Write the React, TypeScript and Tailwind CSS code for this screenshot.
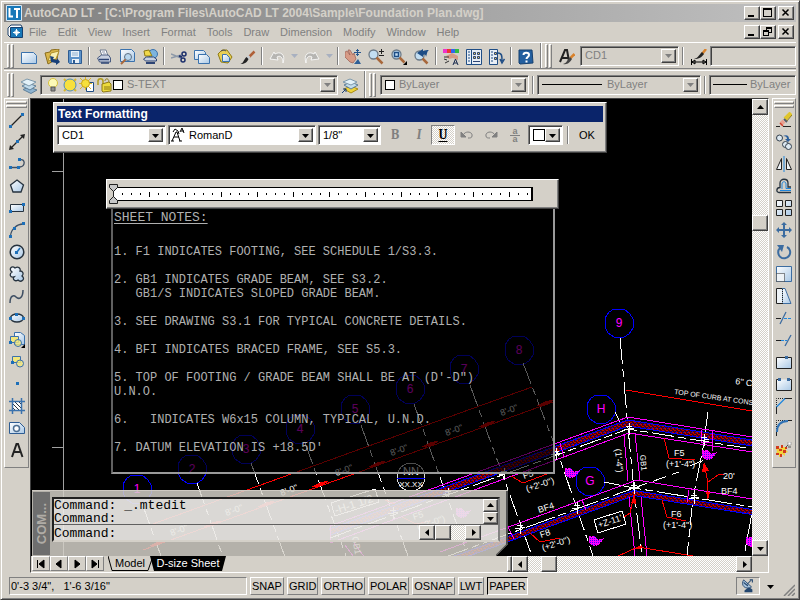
import type { ReactNode } from "react";
import { clsx } from "clsx";

const RAISED =
  "border border-t-white border-l-white border-b-[#404040] border-r-[#404040] bg-[#d4d0c8] shadow-[inset_-1px_-1px_0_#808080]";
const SUNKEN =
  "border border-t-[#808080] border-l-[#808080] border-b-white border-r-white shadow-[inset_1px_1px_0_#404040]";
const TRACK =
  "bg-[conic-gradient(#fff_25%,#d4d0c8_0_50%,#fff_0_75%,#d4d0c8_0)] bg-[length:2px_2px]";

const ICONS: Record<string, ReactNode> = {
  new: <path d="M.5 3.500h12l3 3v8H.5z" fill="url(#sheet)" stroke="#3b72ad" />,
  open: (
    <>
      <path d="M1 4l5-1 1-2 8-1-2 10-9 5z" fill="#d9b64a" stroke="#8a6c1c" />
      <path d="M4 12L7 4l8-2-3 8z" fill="#f8efb0" stroke="#b08f2c" />
      <path d="M6 7l4 1-1 2 4 1v-2l3 4-4 3v-2l-5-1z" fill="#173f78" />
    </>
  ),
  save: (
    <>
      <path d="M1.500 1.500h13v13h-12l-1-1z" fill="#5e93c9" stroke="#2e5c92" />
      <path d="M4 2h8v6H4zM5 10h7v4H5z" fill="#e9f1f8" />
      <path d="M5 4h6M5 6h6" stroke="#8fb0d0" />
      <path d="M6 11h2v3H6z" fill="#2e5c92" />
    </>
  ),
  plot: (
    <>
      <path d="M4 1h6l2 6H6z" fill="#fff" stroke="#707c90" />
      <path d="M1.500 9l4-3h7l2 3v4h-11z" fill="#c8d0e0" stroke="#4a5c80" />
      <path d="M3 10.500h10M5 14h8" stroke="#2d4474" strokeWidth="1.500" />
      <path d="M6 3h3M7 5h3" stroke="#8a94ac" />
    </>
  ),
  preview: (
    <>
      <path d="M1.500.5h11l3 3v9h-14z" fill="url(#sheet)" stroke="#3b72ad" />
      <circle cx="9" cy="8" r="3.500" fill="#b9d7ee" stroke="#5d6f82" />
      <path d="M6.500 10.500L2 15" stroke="#a8683c" strokeWidth="2" />
    </>
  ),
  publish: (
    <>
      <circle cx="11" cy="5" r="4.500" fill="#7db4de" stroke="#3b72ad" />
      <path d="M2 2l5-1 3 6H3z" fill="#f0d84a" stroke="#8f7a14" />
      <path d="M1.500 10l3-2h7l3 2v2h-11z" fill="#c8d0e0" stroke="#2d4474" />
      <path d="M4 14h9" stroke="#2d4474" strokeWidth="2" />
    </>
  ),
  cut: (
    <>
      <path d="M0 5l10 4M0 9l10-3" stroke="#8c98a8" strokeWidth="1.500" />
      <path d="M8 7l3 1" stroke="#1c2f6c" strokeWidth="2" />
      <circle cx="13" cy="5" r="2" fill="none" stroke="#1c2f6c" strokeWidth="1.500" />
      <circle cx="12" cy="11" r="2" fill="none" stroke="#1c2f6c" strokeWidth="1.500" />
    </>
  ),
  copy: (
    <>
      <path d="M.5 1.500h9l2 2v7H.5z" fill="url(#sheet)" stroke="#3b72ad" />
      <path d="M4.500 5.500h8l3 3v6h-11z" fill="url(#sheet)" stroke="#3b72ad" />
    </>
  ),
  paste: (
    <>
      <path d="M1 5l4-4h5l5 7-4 6-7-1z" fill="#e8cf55" stroke="#8f7a14" />
      <path d="M5.500 5.500h4l3 3v4h-7z" fill="url(#sheet)" stroke="#3b72ad" />
      <path d="M4 2l3-1 2 1" stroke="#555" fill="none" />
    </>
  ),
  brush: (
    <>
      <path d="M14.500 2.500L9 8" stroke="#b06038" strokeWidth="2.500" />
      <path d="M9.500 7L7 9.500" stroke="#c9ced4" strokeWidth="2.500" />
      <path d="M6.500 8l2 2c-1 3-4 5-8 5 3-1 3-4 6-7z" fill="#222" />
    </>
  ),
  undo: (
    <path d="M14 14c3-9-3-12-8-9L5 3 1 10l8 1-1-3c3-2 6 0 6 6z" fill="#b6b5b2" stroke="#fff" strokeWidth=".8" />
  ),
  redo: (
    <path d="M2 14C-1 5 5 2 10 5l1-2 4 7-8 1 1-3c-3-2-6 0-6 6z" fill="#b6b5b2" stroke="#fff" strokeWidth=".8" />
  ),
  pan: (
    <>
      <path d="M0 3l2-1 3 4-2-5h2l3 5 1-2 2 6-3 4-3-1-5-5 0-2z" fill="#d79b86" stroke="#9a5c50" strokeWidth=".7" />
      <path d="M9 15l4-5 3 5z" fill="#2f5f96" />
      <path d="M12.500 0v7M9 3.500h7M11 1.500h3M11 5.500h3" stroke="#27568f" />
    </>
  ),
  zoom: (
    <>
      <circle cx="5.500" cy="5.500" r="4.500" fill="#c3def2" stroke="#6c7a88" strokeWidth="1.300" />
      <path d="M8.500 8.500l6 6" stroke="#a8683c" strokeWidth="2.500" />
      <path d="M13.500 0v5M11 2.500h5M11 6.500h5" stroke="#222" />
    </>
  ),
  zoomWindow: (
    <>
      <circle cx="5.500" cy="5.500" r="4.500" fill="#c3def2" stroke="#6c7a88" strokeWidth="1.300" />
      <path d="M3.500 3.500h4v4h-4z" fill="none" stroke="#1d4d86" strokeWidth="1.500" />
      <path d="M8.500 8.500l5 5" stroke="#a8683c" strokeWidth="2.500" />
      <path d="M16 12v4h-4z" fill="#000" />
    </>
  ),
  zoomPrev: (
    <>
      <circle cx="5.500" cy="6.500" r="4.500" fill="#c3def2" stroke="#6c7a88" strokeWidth="1.300" />
      <path d="M8.500 9.500l5 5" stroke="#a8683c" strokeWidth="2.500" />
      <path d="M3 4l6-4v2c2-1 4-1 6-1-2 1-2 4-3 7 0-2-1-3-3-2v2z" fill="#1d4d86" />
    </>
  ),
  properties: (
    <>
      <path d="M0 0h4v4H0z" fill="#e3c" />
      <path d="M4 0h4v4H4z" fill="#e33" />
      <path d="M8 0h4v4H8z" fill="#36e" />
      <path d="M12 0h4v4h-4z" fill="#3b4" />
      <path d="M3 7l6-3 6 3v4l-5-2-4 1z" fill="#d79b86" />
      <path d="M1 8h5M1 10l3 1M2 14l4-2" stroke="#333" />
      <path d="M10 16l2.500-6 2.500 6M11 14h3" fill="none" stroke="#16284c" />
    </>
  ),
  designCenter: (
    <>
      <path d="M.5.5h15v15H.5z" fill="#e8eef5" stroke="#1f4d85" />
      <path d="M5.500 1v14" stroke="#1f4d85" />
      <path d="M2 3h2M2 6h2M2 9h2M2 12h2" stroke="#1f4d85" />
      <path d="M7.500 3.500h2v2h-2zM11.500 3.500h2v2h-2zM7.500 7.500h2v2h-2zM11.500 7.500h2v2h-2z" fill="#e8cf55" stroke="#2d4474" />
      <path d="M7 12.500h7" stroke="#2d4474" />
    </>
  ),
  palettes: (
    <>
      <path d="M.5.5h8v15h-8z" fill="#e8eef5" stroke="#1f4d85" />
      <path d="M2 3h2M2 6h2M2 9h2M2 12h2" stroke="#1f4d85" />
      <path d="M5.500 3.500h2v2h-2zM5.500 8.500h2v2h-2z" fill="#e8cf55" stroke="#2d4474" />
      <path d="M9 4c4 0 4 3 4 8M11 10l2 4 2.500-4" fill="none" stroke="#1f4d85" strokeWidth="1.500" />
    </>
  ),
  help: (
    <>
      <path d="M1 1h13l1 13-13 1-1-1z" fill="#235f9f" stroke="#16406f" />
      <path d="M5.500 6c0-3 5.500-3 5.500 0 0 2-2.500 2-2.500 4M8.500 11.500v2" fill="none" stroke="#fff" strokeWidth="2" />
    </>
  ),
  textStyle: (
    <>
      <path d="M1 13L6 1h2l2 11M3 9h6" fill="none" stroke="#222" strokeWidth="2" />
      <path d="M15.500 5l-4 4" stroke="#d9822b" strokeWidth="2.500" />
      <path d="M11 8l2 2c-2 3-4 6-9 5 4-1 4-4 7-7z" fill="#444" />
    </>
  ),
  dimStyle: (
    <>
      <path d="M15 0l-4 5" stroke="#d9822b" strokeWidth="2.500" />
      <path d="M11 3l2 2c-2 3-5 5-10 5 4-1 5-4 8-7z" fill="#222" />
      <path d="M.5 10v6M15.500 10v6M1 13h14M1 13l3-2v4zM15 13l-3-2v4z" stroke="#000" />
    </>
  ),
  layers: (
    <>
      <path d="M2 11.500l6-2.500 8 3-6 3.500z" fill="#8fb4d0" stroke="#5f7f98" />
      <path d="M1 8l6-3 8 3-6 4z" fill="#c2dcec" stroke="#5f7f98" />
      <path d="M0 4l6-3 9 3-7 4z" fill="#e3f1f8" stroke="#7d98ab" />
    </>
  ),
  layerPrev: (
    <>
      <path d="M2 11l7-3 7 3-7 4z" fill="#eed23a" stroke="#a98c12" />
      <path d="M2 7l7-3 7 3-7 4z" fill="#c2dcec" stroke="#5f7f98" />
      <path d="M1 4l7-3 7 3-6 3z" fill="#e3f1f8" stroke="#7d98ab" />
      <path d="M0 15l4-4M1 11h3v3" stroke="#173f78" fill="none" />
    </>
  ),
  bulb: (
    <>
      <circle cx="8" cy="6" r="4.500" fill="#fdfab8" stroke="#d8c23c" />
      <path d="M6 10h4v4H6z" fill="#8f8f8f" stroke="#555" />
    </>
  ),
  sun: (
    <>
      <path d="M2 2l12 12M14 2L2 14" stroke="#d9b728" strokeWidth="2" />
      <circle cx="8" cy="8" r="6" fill="#f7e03c" stroke="#4f8bbf" />
    </>
  ),
  sunViewport: (
    <>
      <path d="M7.500 5.500h7v9h-7z" fill="#fff" stroke="#1f4d85" />
      <path d="M1 1l11 11M12 1L1 12M6.500 0v13M0 6.500h13" stroke="#d9b728" />
      <circle cx="6.500" cy="6.500" r="4" fill="#f7e03c" stroke="#c9a51c" />
    </>
  ),
  lock: (
    <>
      <path d="M2 8V4c0-3 5-3 5 0v4" fill="none" stroke="#b39c1c" strokeWidth="1.500" />
      <path d="M6 7l7-2 2 2v7l-8 1-1-1z" fill="#eddb3c" stroke="#8f7a14" />
      <path d="M9 4c0-3 4-3 4 1M8 10h6M8 12h6" fill="none" stroke="#8f7a14" />
    </>
  ),
  line: (
    <>
      <path d="M2 14L14 2" stroke="#222" strokeWidth="1.200" />
      <path d="M0 13h3v3H0zM12 1h3v3h-3z" fill="#1d6fb8" />
    </>
  ),
  xline: (
    <>
      <path d="M2 14L14 2" stroke="#222" strokeWidth="1.200" />
      <path d="M0 16l1-5 4 4zM16 0l-1 5-4-4z" fill="#222" />
      <path d="M7 6h3v3H7z" fill="#1d6fb8" />
    </>
  ),
  pline: (
    <>
      <path d="M2 11.500h8M11 4c5-2 6 6 0 7" fill="none" stroke="#3f4f63" strokeWidth="1.300" />
      <path d="M0 10h3v3H0zM9 2h3v3H9zM8 10h3v3H8z" fill="#1d6fb8" />
    </>
  ),
  polygon: <path d="M8 2l6.500 5-2.500 7H4L1.500 7z" fill="url(#sheet)" stroke="#26323e" strokeWidth="1.300" />,
  rectangle: (
    <>
      <path d="M1.500 4.500h13v7h-13z" fill="url(#sheet)" stroke="#26323e" />
      <path d="M0 10h3v3H0zM13 3h3v3h-3z" fill="#1d6fb8" />
    </>
  ),
  arc: (
    <>
      <path d="M1.500 14C2 7 8 2 14 2" fill="none" stroke="#3f4f63" strokeWidth="1.300" />
      <path d="M0 13h3v3H0zM4 5h3v3H4zM13 0h3v3h-3z" fill="#1d6fb8" />
    </>
  ),
  circle: (
    <>
      <circle cx="8" cy="8" r="6.800" fill="url(#sheet)" stroke="#26323e" strokeWidth="1.500" />
      <path d="M8 8l3-4" stroke="#1d6fb8" strokeWidth="1.500" />
      <path d="M6 7h3v3H6z" fill="#1d6fb8" />
    </>
  ),
  cloud: (
    <path
      d="M3 6C-1 3 3-1 6 2c3-2 6 0 5 3 3 0 4 3 2 5 4 3-1 7-4 4-3 2-6-1-4-3-4 1-5-3-2-5z"
      fill="url(#sheet)"
      stroke="#26323e"
      strokeWidth="1.300"
    />
  ),
  spline: <path d="M1 15c0-8 4-8 6-6 3 3 7 1 7-7" fill="none" stroke="#3f4f63" strokeWidth="1.500" />,
  ellipse: (
    <>
      <ellipse cx="8" cy="8" rx="6.500" ry="4" fill="url(#sheet)" stroke="#26323e" strokeWidth="1.300" />
      <path d="M0 7h3v3H0zM6 3h3v3H6zM13 7h3v3h-3z" fill="#1d6fb8" />
    </>
  ),
  insertBlock: (
    <>
      <path d="M5.500.5h6l4 3v9h-10z" fill="url(#sheet)" stroke="#3b72ad" />
      <path d="M1.500 4.500h8v6h-8z" fill="#f3e77c" stroke="#3b72ad" />
      <circle cx="9" cy="11" r="3.500" fill="#f3e77c" fillOpacity=".8" stroke="#3b72ad" />
      <path d="M0 9h3v3H0z" fill="#1d6fb8" />
      <path d="M16 12v4h-4z" fill="#000" />
    </>
  ),
  makeBlock: (
    <>
      <path d="M3.500 2.500h8v6h-8z" fill="#f3e77c" stroke="#3b72ad" />
      <circle cx="11" cy="9.500" r="3.500" fill="#f3e77c" fillOpacity=".8" stroke="#3b72ad" />
      <path d="M2 7h3v3H2z" fill="#1d6fb8" />
    </>
  ),
  point: <path d="M7 6h3v3H7z" fill="#1d6fb8" />,
  hatch: (
    <>
      <path d="M3 3h10v10H3z" fill="#fff" />
      <path d="M3 9l4 4M3 5l8 8M5 3l8 8M9 3l4 4" stroke="#26323e" />
      <path d="M3.500 0v16M12.500 0v16M0 3.500h16M0 12.500h16" stroke="#3b72ad" strokeWidth="1.500" />
    </>
  ),
  region: (
    <>
      <path d="M.5 2.500h10l5 5v6H.5z" fill="url(#sheet)" stroke="#2e5c92" />
      <circle cx="7.500" cy="8.500" r="3" fill="#fff" stroke="#4d6f92" strokeWidth="1.500" />
    </>
  ),
  mtext: <path d="M3 15L7.500 2h1.500L13.500 15M5 10h7" fill="none" stroke="#222" strokeWidth="2" />,
  erase: (
    <>
      <path d="M15 1L9 7" stroke="#e0c52c" strokeWidth="4" />
      <path d="M16 3l-6 7" stroke="#8f7a14" />
      <path d="M8 7l3 3" stroke="#555c68" strokeWidth="2" />
      <path d="M8 9l-3 3" stroke="#e8a090" strokeWidth="4" />
      <path d="M4 11l3 3" stroke="#d0402c" strokeWidth="1.500" />
      <path d="M0 14.500h4M7 14.500h8" stroke="#222" />
    </>
  ),
  copyObject: (
    <>
      <circle cx="3.500" cy="4" r="3" fill="#dde9f2" stroke="#333f4c" />
      <circle cx="9.500" cy="10.500" r="3" fill="#dde9f2" stroke="#333f4c" />
      <circle cx="12.500" cy="12.500" r="3" fill="#dde9f2" stroke="#333f4c" />
      <path d="M7 2c4-2 6 0 6 3h2l-3 3-3-3h2c0-2-1-3-4-3z" fill="#2c5f9c" />
    </>
  ),
  mirror: (
    <>
      <path d="M.5 13.500h5v-11zM15.500 13.500h-5v-11z" fill="#eef3f7" stroke="#222" />
      <path d="M8 0v16" stroke="#1e86dd" />
    </>
  ),
  offset: (
    <>
      <path d="M15 14.500H3c-3 0-3-5 1-5V5c0-5 8-5 8 0v4h3" fill="none" stroke="#26323e" strokeWidth="1.300" />
      <path d="M15 12.500H4M15 10.500h-5V6c0-3-4-3-4 0v5" fill="none" stroke="#1e86dd" />
    </>
  ),
  array: <path d="M.5.5h6v6h-6zM9.500.5h6v6h-6zM.5 9.500h6v6h-6zM9.500 9.500h6v6h-6z" fill="url(#sheet)" stroke="#222" />,
  move: (
    <path
      d="M8 0l3 3H9v4h4V5l3 3-3 3V9H9v4h2l-3 3-3-3h2V9H3v2L0 8l3-3v2h4V3H5z"
      fill="#3c6ca0"
    />
  ),
  rotate: (
    <>
      <path d="M11 3a6 6 0 1 1-7 1" fill="none" stroke="#3c6ca0" strokeWidth="2" />
      <path d="M1 1h7L6 8z" fill="#3c6ca0" />
    </>
  ),
  scale: (
    <>
      <path d="M.5.5h15v15H.5z" fill="url(#sheet)" stroke="#3c6ca0" />
      <path d="M.5 7.500h8v8h-8z" fill="#eef3f7" stroke="#222" strokeDasharray="1 1" />
    </>
  ),
  stretch: (
    <>
      <path d="M6 .5h3l6 15H6z" fill="url(#sheet)" stroke="#3c6ca0" />
      <path d="M6 .5H.5v15H6" fill="#eef3f7" stroke="#222" />
      <path d="M6.500 1v15" stroke="#222" strokeDasharray="1 1" />
    </>
  ),
  trim: (
    <>
      <path d="M0 8.500h5" stroke="#222" />
      <path d="M8 8.500h8" stroke="#1e86dd" strokeDasharray="3 1" />
      <path d="M4 14L10 2" stroke="#3c6ca0" strokeWidth="1.300" />
    </>
  ),
  extend: (
    <>
      <path d="M0 8.500h5" stroke="#222" />
      <path d="M5 8.500h6" stroke="#1e86dd" strokeDasharray="3 1" />
      <path d="M9 14l6-11" stroke="#3c6ca0" strokeWidth="1.300" />
    </>
  ),
  breakPoint: (
    <>
      <path d="M.5 3.500h15v11H.5z" fill="url(#sheet)" stroke="#222" />
      <path d="M9 2h3v3H9z" fill="#3c6ca0" />
    </>
  ),
  break: (
    <>
      <path d="M.5 3.500h15v11H.5z" fill="url(#sheet)" />
      <path d="M3 3.500H.5v11h15v-11H13" fill="none" stroke="#222" />
      <path d="M2 2h3v3H2zM11 2h3v3h-3z" fill="#3c6ca0" />
    </>
  ),
  chamfer: (
    <>
      <path d="M.5 16V9M9 .5h7" stroke="#222" />
      <path d="M.5 9V.5H9" fill="none" stroke="#222" strokeDasharray="1 1" />
      <path d="M.5 9L9 .5" stroke="#1e86dd" strokeWidth="1.300" />
    </>
  ),
  fillet: (
    <>
      <path d="M.5 9V.5H9" fill="none" stroke="#222" strokeDasharray="1 1" />
      <path d="M.5 16v-4M12 .5h4" stroke="#222" />
      <path d="M1 12C1 5 5 1 12 1" fill="none" stroke="#2f72b5" strokeWidth="2" />
    </>
  ),
  explode: (
    <>
      <path d="M0 4h3v2h2V3h2v2h3v3l2 2-3 1v3l-3-2-1 3H3v-3H0l1-3-1-2z" fill="#f2d43a" />
      <path d="M0 4h3v3H0zM5 3h2v3H5zM3 7h3v2H3zM7 8h3v3H7zM9 5h2v2H9zM0 11h3v2H0zM4 12h2v3H4z" fill="#d23a1e" />
      <path d="M10 5l3-3M12 5h3" stroke="#555" />
      <path d="M12 0h3v3h-3z" fill="#fff" stroke="#777" strokeWidth=".5" />
    </>
  ),
};

function Icon({ name }: { name: string }) {
  return (
    <svg viewBox="0 0 16 16" className="h-4 w-4 shrink-0" aria-hidden="true" fill="none">
      {ICONS[name]}
    </svg>
  );
}

function ToolButton({ name, vertical = false }: { name: string; vertical?: boolean }) {
  return (
    <button
      type="button"
      aria-label={name}
      className={clsx("flex shrink-0 items-center justify-center", vertical ? "h-[22px] w-full" : "h-6 w-[23px] pt-0.5")}
    >
      <Icon name={name} />
    </button>
  );
}

function Separator() {
  return (
    <span className="flex w-1.5 shrink-0 justify-center">
      <span className="h-[18px] w-0.5 border-l border-r border-l-[#808080] border-r-white" />
    </span>
  );
}

function Handle() {
  return (
    <span className="mx-[3px] flex h-6 shrink-0 gap-px">
      <span className="w-[3px] border border-t-white border-l-white border-b-[#808080] border-r-[#808080]" />
      <span className="w-[3px] border border-t-white border-l-white border-b-[#808080] border-r-[#808080]" />
    </span>
  );
}

function Triangle({ dir, className }: { dir: "up" | "down" | "left" | "right"; className?: string }) {
  const d = { up: "M0 5L3.500 1 7 5z", down: "M0 2h7L3.500 6z", left: "M5 0v7L1 3.500z", right: "M2 0l4 3.500L2 7z" }[dir];
  return (
    <svg viewBox="0 0 7 7" className={clsx("h-[7px] w-[7px]", className ?? "fill-black")} aria-hidden="true">
      <path d={d} />
    </svg>
  );
}

type ComboProps = {
  label: string;
  value: string;
  className?: string;
  lead?: ReactNode;
  disabled?: boolean;
  arrow?: boolean;
};

function Combo({ label, value, className, lead, disabled = false, arrow = true }: ComboProps) {
  return (
    <div className={clsx("flex h-5 shrink-0 items-center p-0.5", SUNKEN, disabled ? "bg-[#d4d0c8]" : "bg-white", className)}>
      {lead}
      <select
        aria-label={label}
        className={clsx(
          "h-full w-0 min-w-0 flex-1 appearance-none bg-transparent text-[11px] leading-none outline-none",
          value ? "px-0.5" : "px-0",
          disabled && "text-[#808080]",
        )}
      >
        <option>{value}</option>
      </select>
      {arrow && (
        <span className={clsx("pointer-events-none flex h-full w-[15px] shrink-0 items-center justify-center", RAISED)}>
          <Triangle dir="down" className={disabled ? "fill-[#808080]" : "fill-black"} />
        </span>
      )}
    </div>
  );
}

function ScrollButton({ dir }: { dir: "up" | "down" | "left" | "right" }) {
  return (
    <button type="button" aria-label={`Scroll ${dir}`} className={clsx("flex h-4 w-4 shrink-0 items-center justify-center", RAISED)}>
      <Triangle dir={dir} />
    </button>
  );
}

function WindowButtons({ restore = false }: { restore?: boolean }) {
  const cls = clsx("flex h-[14px] w-4 items-center justify-center", RAISED);
  return (
    <div className="ml-auto flex pr-0.5">
      <button type="button" aria-label="Minimize" className={cls}>
        <svg viewBox="0 0 10 10" className="h-2.5 w-2.5"><path d="M1 8h6" stroke="#000" strokeWidth="2" /></svg>
      </button>
      <button type="button" aria-label="Maximize" className={cls}>
        <svg viewBox="0 0 10 10" className="h-2.5 w-2.5" fill="none" stroke="#000" shapeRendering="crispEdges">
          {restore ? (
            <path d="M3.500 3V.5h5v5H6M3 1h6M.5 3.500h5v5h-5zM0 4h6" />
          ) : (
            <path d="M.5.5h8v8h-8zM0 1.500h9" />
          )}
        </svg>
      </button>
      <button type="button" aria-label="Close" className={clsx("ml-0.5", cls)}>
        <svg viewBox="0 0 10 10" className="h-2.5 w-2.5"><path d="M1.500 1.500l6 6M7.500 1.500l-6 6" stroke="#000" strokeWidth="1.500" /></svg>
      </button>
    </div>
  );
}

const MENUS = ["File", "Edit", "View", "Insert", "Format", "Tools", "Draw", "Dimension", "Modify", "Window", "Help"];

const STANDARD = [
  "new", "open", "save", "|", "plot", "preview", "publish", "|", "cut", "copy", "paste", "brush", "|",
  "undo", "v", "redo", "v", "|", "pan", "zoom", "zoomWindow", "zoomPrev", "|", "properties", "designCenter", "palettes", "|", "help",
];

const DRAW = [
  "line", "xline", "pline", "polygon", "rectangle", "arc", "circle", "cloud",
  "spline", "ellipse", "insertBlock", "makeBlock", "point", "hatch", "region", "mtext",
];

const MODIFY = [
  "erase", "copyObject", "mirror", "offset", "array", "move", "rotate", "scale",
  "stretch", "trim", "extend", "breakPoint", "break", "chamfer", "fillet", "explode",
];

function Dock({ tools }: { tools: string[] }) {
  return (
    <div className="w-full border border-t-white border-l-white border-b-[#808080] border-r-[#808080] px-px pb-1.5">
      <div className="mt-0.5 mb-px flex h-[7px] flex-col gap-px">
        <span className="h-[3px] border border-t-white border-l-white border-b-[#808080] border-r-[#808080]" />
        <span className="h-[3px] border border-t-white border-l-white border-b-[#808080] border-r-[#808080]" />
      </div>
      {tools.map((name) => (
        <ToolButton key={name} name={name} vertical />
      ))}
    </div>
  );
}

const BUBBLES = [
  { n: "1", x: 137, y: 489 },
  { n: "2", x: 192, y: 469 },
  { n: "3", x: 246, y: 449 },
  { n: "4", x: 300, y: 429 },
  { n: "5", x: 355, y: 409 },
  { n: "6", x: 410, y: 389 },
  { n: "7", x: 464, y: 369 },
  { n: "8", x: 519, y: 350 },
];

function Bubble({ n, x, y }: { n: string; x: number; y: number }) {
  return (
    <g transform={`translate(${x} ${y})`}>
      <path d="M-5-14L5-14 11-9 14-4V5L10 11 5 14H-5L-11 10-14 4V-5L-10-11z" stroke="#00f" />
      <text x="0" y="4" textAnchor="middle" fill="#f0f" fontSize="12">{n}</text>
    </g>
  );
}

function Cross({ x, y }: { x: number; y: number }) {
  return <path d={`M${x - 5} ${y + 1}l10-2M${x} ${y - 6}l1 12M${x - 3} ${y - 3}h6`} stroke="#fff" />;
}

function Scribble({ x, y }: { x: number; y: number }) {
  return (
    <path
      d={`M${x - 6} ${y - 4}l5-1 4 4 5-1-4 5-5 2-5-3z`}
      fill="url(#speckle)"
      stroke="#f0f"
      strokeDasharray="2 1"
    />
  );
}

/* Model space: everything is placed in drawing coordinates. */
function FoundationPlan() {
  return (
    <svg
      viewBox="31 99 721 457"
      preserveAspectRatio="xMinYMin slice"
      className="absolute inset-0 h-full w-full"
      fill="none"
      shapeRendering="crispEdges"
      fontFamily="'Liberation Sans', sans-serif"
      aria-hidden="true"
    >
      <defs>
        <pattern id="rebar" width="4" height="4" patternUnits="userSpaceOnUse">
          <path d="M0 0h4v4H0z" fill="#500000" />
          <path d="M0 0h2v1H0zM2 2h2v1H2zM1 1h1v1H1z" fill="#c00000" />
          <path d="M3 0h1v1H3zM0 3h1v1H0z" fill="#0000d0" />
        </pattern>
        <pattern id="speckle" width="2" height="2" patternUnits="userSpaceOnUse">
          <path d="M0 0h2v2H0z" fill="#f0f" />
          <path d="M0 0h1v1H0z" fill="#40f" />
        </pattern>
      </defs>

      <path d="M63.500 99v457M52 171.500h11M52 447.500h11" stroke="#a0a0a0" />

      {BUBBLES.map((b) => (
        <Bubble key={b.n} {...b} />
      ))}
      <Bubble n="9" x={619} y={323} />
      <Bubble n="H" x={601} y={409} />
      <Bubble n="G" x={590} y={481} />

      {/* column grid */}
      <path
        d="M142 503l19 53M197 483l26 74M251 463l34 94M305 443l41 113M361 425l47 131M414 404l54 152M470 385l62 171M523 363l37 96 33 97"
        stroke="#fff"
        strokeDasharray="22 5 7 5"
      />
      <path d="M620 338l4 44 4 46 6 62 8 66M708 412l-5 36-10 50-6 58M752 513l-8 43" stroke="#fff" strokeDasharray="26 5 8 5" />
      <path d="M604 482l30 6M615 412l8 16" stroke="#fff" />

      {/* dimension strings */}
      <path d="M150 525L532 387M143 550L553 402" stroke="#f00" />
      {[158, 212, 266, 320, 377, 430, 487, 545].map((x) => (
        <path key={x} d={`M${x - 8} ${548 - Math.round((x - 153) * 0.363)}l8-4 8-2-6 4z`} fill="#f00" stroke="#f00" />
      ))}
      <g fill="#fff" fontSize="9" textAnchor="middle">
        {[0, 1, 2, 3, 4, 5, 6].map((i) => (
          <text key={i} transform={`translate(${180 + i * 55} ${533 - i * 20}) rotate(-20)`}>8'-0"</text>
        ))}
      </g>

      {/* north wall footing */}
      <path d="M330 532L628 423 752 443" stroke="#00f" strokeWidth="7" />
      <path d="M330 532L628 423 752 443" stroke="url(#rebar)" strokeWidth="5" />
      <path d="M330 526L628 417 752 437M330 543L629 433 752 452M330 526v17" stroke="#f0f" />
      <path d="M330 538L628 429 746 448" stroke="#fff" strokeDasharray="22 4 8 4" />

      {/* south grade beam */}
      <path d="M440 564L634 493 752 512" stroke="#00f" strokeWidth="6" />
      <path d="M440 564L634 493 752 512" stroke="url(#rebar)" strokeWidth="4" />
      <path d="M440 552L637 480 752 499" stroke="#f0f" />
      <path d="M440 559L634 488 752 507" stroke="#fff" strokeDasharray="30 4 8 4" />

      <path
        d="M624 435l4 46M635 434l5 46M629 497l6 59M641 497l6 59M701 430v12h11v9M712 430v20M689 490l-2 12M560 443l4 14M508 527l6 12M582 500l4 10M345 545l12 16M354 543l12 16"
        stroke="#f0f"
      />
      <path d="M634 488l45-16M690 466l14-6" stroke="#fff" strokeDasharray="14 6" />
      <Cross x={629} y={429} />
      <Cross x={704} y={440} />
      <Cross x={634} y={488} />
      <Cross x={577} y={508} />
      <Cross x={694} y={498} />
      <Cross x={556} y={454} />
      <Cross x={448} y={494} />
      <Cross x={520} y={528} />
      <Cross x={393} y={513} />
      <Cross x={504} y={474} />
      <Scribble x={708} y={455} />
      <Scribble x={571} y={473} />
      <Scribble x={595} y={541} />
      <Scribble x={752} y={542} />
      <Scribble x={462} y={513} />

      {/* leaders */}
      <path
        d="M626 390l126 21M664 438l5 20 26 2M662 500l5 17 19 4M704 464l4 18-1 17M708 482l10-7 6-1M624 517l6-4 4-18M618 556l20-9 55 9M511 476l12 7 24-9M530 533l10 9 20-4M385 500l10 4M402 517l14 7 14-3"
        stroke="#f00"
      />
      <path d="M702 472l2-10 5 9zM706 492l2 8 2-8zM631 503l4-10 1 11zM632 549l10-4-1 4z" fill="#f00" />

      <circle cx="411" cy="477" r="14" stroke="#ddd" />
      <path d="M397 478h28" stroke="#00f" />
      <g fill="#fff">
        <text x="411" y="475" fontSize="11" textAnchor="middle">NN</text>
        <text x="411" y="487" fontSize="8" textAnchor="middle">XX.XX</text>
        <g fontSize="9">
          <text transform="translate(674 394) rotate(8)" fontSize="7">TOP OF CURB AT CONS</text>
          <text transform="translate(735 384) rotate(8)">6" C</text>
          <text x="674" y="456">F5</text>
          <text x="666" y="467">(+1'-4")</text>
          <text x="671" y="517">F6</text>
          <text x="663" y="528">(+1'-4")</text>
          <text x="723" y="479">20'</text>
          <text x="721" y="494">BF4</text>
          <text transform="translate(640 455) rotate(85)" fontSize="8">GB1</text>
          <text transform="translate(615 449) rotate(85)">(1'-4")</text>
          <text transform="translate(524 479) rotate(-18)">F5</text>
          <text transform="translate(527 492) rotate(-18)">(+2'-0")</text>
          <text transform="translate(539 513) rotate(-18)">BF4</text>
          <text transform="translate(541 538) rotate(-18)">F8</text>
          <text transform="translate(543 551) rotate(-18)">(+2'-0")</text>
          <text transform="translate(599 528) rotate(-18)">+Z-11'</text>
          <text transform="translate(336 514) rotate(-18)" fontSize="11">-H-1 1/2</text>
          <text transform="translate(414 520) rotate(-18)">F5</text>
          <text transform="translate(418 530) rotate(-18)">(+2'-0")</text>
          <text transform="translate(352 537) rotate(80)">GB1</text>
        </g>
      </g>
      <path d="M594 520l28-9 4 13-28 9zM331 503l44-14 4 13-44 14z" stroke="#fff" />
    </svg>
  );
}

function TextFormatting() {
  return (
    <section className={clsx("absolute top-[3px] left-[22px] w-[554px] p-[3px]", RAISED)}>
      <h2 className="h-4 bg-[#0a246a] px-px text-[12px] leading-4 font-bold text-white">Text Formatting</h2>
      <div className="mt-[3px] mb-1 flex h-5 items-center">
        <Combo label="Style" value="CD1" className="w-[109px]" />
        <Combo
          label="Font"
          value="RomanD"
          className="ml-0.5 w-[148px]"
          lead={
            <svg viewBox="0 0 14 14" className="mr-0.5 h-3.5 w-3.5 shrink-0" fill="none" stroke="#000" aria-hidden="true">
              <path d="M1 13L5 4h1l3 9M3 9h5M2 4l2-3 3 2 1 3M9 4l2-4 2 5M10 3h3M0 13h3M8 13h3" />
            </svg>
          }
        />
        <Combo label="Height" value={'1/8"'} className="ml-0.5 w-[63px]" />
        <button type="button" className="ml-0.5 h-5 w-6 font-serif text-[13px] font-bold text-[#808080]">B</button>
        <button type="button" className="h-5 w-6 font-serif text-[13px] font-bold text-[#808080] italic">I</button>
        <button type="button" className={clsx("h-5 w-6 border border-t-[#808080] border-l-[#808080] border-b-white border-r-white font-serif text-[13px] leading-4 font-bold underline underline-offset-2", TRACK)}>
          U
        </button>
        <button type="button" aria-label="Undo" className="flex h-5 w-6 items-center justify-center">
          <svg viewBox="0 0 14 10" className="h-2.5 w-3.5" fill="none" stroke="#808080">
            <path d="M3 5c3-5 10-3 9 1 0 2-2 2-4 2" />
            <path d="M1 2v5h5z" fill="#808080" />
          </svg>
        </button>
        <button type="button" aria-label="Redo" className="flex h-5 w-6 items-center justify-center">
          <svg viewBox="0 0 14 10" className="h-2.5 w-3.5" fill="none" stroke="#808080">
            <path d="M11 5C8 0 1 2 2 6c0 2 2 2 4 2" />
            <path d="M13 2v5H8z" fill="#808080" />
          </svg>
        </button>
        <button type="button" aria-label="Stack" className="flex h-5 w-6 flex-col items-center justify-center text-[9px] leading-[7px] font-bold text-[#808080]">
          <span className="border-b border-[#808080] px-0.5">a</span>
          <span>a</span>
        </button>
        <Combo
          label="Color"
          value=""
          className="ml-px w-[35px]"
          lead={<span className="ml-0.5 h-3 w-3 shrink-0 border border-black" />}
        />
        <span className="mx-1 h-[18px] w-0.5 border-l border-r border-l-[#808080] border-r-white" />
        <button type="button" className="h-5 px-1.5 text-[11px]">OK</button>
      </div>
    </section>
  );
}

const NOTES = [
  "1. F1 INDICATES FOOTING, SEE SCHEDULE 1/S3.3.",
  "2. GB1 INDICATES GRADE BEAM, SEE S3.2.\n   GB1/S INDICATES SLOPED GRADE BEAM.",
  "3. SEE DRAWING S3.1 FOR TYPICAL CONCRETE DETAILS.",
  "4. BFI INDICATES BRACED FRAME, SEE S5.3.",
  "5. TOP OF FOOTING / GRADE BEAM SHALL BE AT (D'-D\")\nU.N.O.",
  "6.   INDICATES W6x15 COLUMN, TYPICAL, U.N.D.",
  "7. DATUM ELEVATION IS +18.5D'",
];

function NotesEditor() {
  const ticks = Array.from({ length: 46 }, (_, i) => i + 1);
  return (
    <section className="absolute top-20 left-[75px] w-[453px]">
      <div className={clsx("relative h-[30px] px-1.5 py-[7px]", RAISED)}>
        <svg viewBox="0 0 426 14" className="h-3.5 w-[426px]" shapeRendering="crispEdges" aria-hidden="true">
          <path d="M0 0h420v14H0z" fill="#fff" />
          <path d="M0 .5h420M0 13.500h420" stroke="#000" />
          <path d="M419 0v14" stroke="#000" strokeWidth="2" />
          {ticks.map((i) => (
            <path key={i} d={i % 4 === 0 ? `M${i * 9}.5 5v5` : `M${i * 9}.5 6v2`} stroke="#000" />
          ))}
        </svg>
        <svg viewBox="0 0 10 20" className="absolute top-1 left-0.5 h-5 w-2.5" aria-hidden="true">
          <path d="M.5.5h8v3l-4 4-4-4zM.5 19.500h8v-3l-4-4-4 4z" fill="#c8c8c8" stroke="#222" />
          <path d="M4.500 7v6" stroke="#222" />
        </svg>
      </div>
      <div
        role="textbox"
        aria-label="Multiline text"
        contentEditable
        suppressContentEditableWarning
        className="mr-1 ml-[5px] h-[265px] border-2 border-t-0 border-[#9a9a9a] border-l-[#606060] bg-black/65 pt-0.5 pl-px font-['Liberation_Mono',monospace] text-[12px] leading-[14px] whitespace-pre text-[#b0b0b0] outline-none"
      >
        <p className="mb-5 text-[13px] underline underline-offset-2">SHEET NOTES:</p>
        {NOTES.map((note) => (
          <p key={note} className="mb-3.5">{note}</p>
        ))}
      </div>
    </section>
  );
}

function CommandWindow() {
  return (
    <section className="absolute bottom-0 left-px flex h-[66px] w-[476px] border-t border-[#d4d0c8]/80 bg-[#d4d0c8]/85 p-px [clip-path:polygon(0_0,100%_0,100%_54px,464px_100%,0_100%)]">
      <h2 className="flex w-[17px] shrink-0 items-center justify-center bg-[#6e6e6e] text-[13px] font-bold text-[#b0aca6]">
        <span className="rotate-180 [writing-mode:vertical-rl]">COM...</span>
      </h2>
      <div className="mt-[5px] ml-0.5 h-[45px] w-[448px] border-2 border-t-[#202020] border-l-[#202020] border-b-[#d4d0c8] border-r-[#808080] font-['Liberation_Mono',monospace] text-[13px] leading-[13px] text-black">
        <div className="flex h-[26px] border-b border-[#606060] bg-white/50">
          <div className="flex-1">
            <p>Command: _.mtedit</p>
            <p>Command:</p>
          </div>
          <div className="w-[15px]">
            <button type="button" aria-label="History up" className={clsx("flex h-[13px] w-[15px] items-center justify-center", RAISED)}><Triangle dir="up" /></button>
            <button type="button" aria-label="History down" className={clsx("flex h-3 w-[15px] items-center justify-center", RAISED)}><Triangle dir="down" /></button>
          </div>
        </div>
        <div className="flex h-[15px] bg-white/50">
          <label htmlFor="command" className="pt-0.5">Command:</label>
          <input id="command" className="ml-1 w-0 min-w-0 flex-1 bg-transparent outline-none" />
          <div className={clsx("mr-[17px] flex w-[62px]", TRACK)}>
            <button type="button" aria-label="Command left" className={clsx("flex h-[15px] w-4 items-center justify-center", RAISED)}><Triangle dir="left" /></button>
            <span className={clsx("h-[15px] w-4", RAISED)} />
            <button type="button" aria-label="Command right" className={clsx("ml-auto flex h-[15px] w-4 items-center justify-center", RAISED)}><Triangle dir="right" /></button>
          </div>
        </div>
      </div>
      <svg viewBox="0 0 12 66" className="absolute top-0 right-0 h-[66px] w-3" aria-hidden="true">
        <path d="M11 0v54L0 65" fill="none" stroke="#505050" strokeWidth="2" />
      </svg>
    </section>
  );
}

function LayoutTabs() {
  const nav = ["M3.500 1v8M10 1L5 5l5 4z", "M9 1L4 5l5 4z", "M5 1l5 4-5 4z", "M10.500 1v8M4 1l5 4-5 4z"];
  return (
    <div className="flex h-4 w-[476px] shrink-0 bg-[#d4d0c8] pl-px text-[11px] leading-[15px]">
      {nav.map((d, i) => (
        <button key={d} type="button" aria-label={`Layout ${i + 1}`} className="flex h-[15px] w-[18px] items-center justify-center border border-t-white border-l-white border-b-[#808080] border-r-[#808080]">
          <svg viewBox="0 0 14 10" className="h-2.5 w-3.5" fill="#000" stroke="#000"><path d={d} /></svg>
        </button>
      ))}
      <button type="button" className="relative ml-1 h-[15px] w-[44px]">
        <svg viewBox="0 0 44 15" className="absolute inset-0 h-full w-full" fill="none" stroke="#000" aria-hidden="true">
          <path d="M0 0l4 14.500h36L44 3" />
        </svg>
        Model
      </button>
      <button type="button" className="-ml-0.5 h-[15px] w-[76px] bg-black text-white [clip-path:polygon(0_0,100%_0,72px_100%,4px_100%)]">
        D-size Sheet
      </button>
    </div>
  );
}

const MODES = ["SNAP", "GRID", "ORTHO", "POLAR", "OSNAP", "LWT", "PAPER"];

function StatusBar() {
  return (
    <footer className="flex h-[23px] shrink-0 items-center gap-[3px] pr-px pl-[5px] text-[11px]">
      <output className="mt-0.5 h-[18px] w-[238px] border border-t-[#808080] border-l-[#808080] border-b-white border-r-white px-px leading-4 whitespace-pre">
        {"0'-3 3/4\",   1'-6 3/16\""}
      </output>
      {MODES.map((mode) => (
        <button
          key={mode}
          type="button"
          aria-pressed={mode === "PAPER"}
          className={clsx(
            "mt-0.5 h-[18px] border px-px leading-4",
            mode === "PAPER"
              ? "border-t-black border-l-black border-b-white border-r-white"
              : "border-t-white border-l-white border-b-[#808080] border-r-[#808080]",
          )}
        >
          {mode}
        </button>
      ))}
      <button type="button" aria-label="Communication Center" className="mt-0.5 ml-auto flex h-[18px] w-6 items-center justify-center border border-t-[#808080] border-l-[#808080] border-b-white border-r-white">
        <svg viewBox="0 0 16 16" className="h-3.5 w-3.5" fill="none">
          <path d="M9 9l4 3v3H4v-2z" fill="#23466f" />
          <path d="M3 1c-4 6 2 12 9 8z" fill="#a9c4dc" stroke="#23466f" />
          <path d="M7 6l4-4M10 1h3v3M3 4l5 4" stroke="#23466f" strokeWidth="1.200" />
        </svg>
      </button>
      <span className="mt-1 ml-1"><Triangle dir="down" /></span>
      <svg viewBox="0 0 12 12" className="ml-1.5 h-3 w-3 self-end" stroke="#808080" aria-hidden="true">
        <path d="M1 12L12 1M5 12l7-7M9 12l3-3" strokeWidth="1.500" />
      </svg>
    </footer>
  );
}

export default function App() {
  return (
    <div className="flex h-screen w-full flex-col overflow-hidden border border-t-[#d4d0c8] border-l-[#d4d0c8] border-b-[#404040] border-r-[#404040] bg-[#d4d0c8] p-[3px] font-['Liberation_Sans',Arial,sans-serif] text-[12px] text-black shadow-[inset_1px_1px_0_#fff,inset_-1px_-1px_0_#808080]">
      <svg className="absolute h-0 w-0" aria-hidden="true">
        <defs>
          <linearGradient id="sheet" x1="0" y1="0" x2="1" y2="1">
            <stop offset="0" stopColor="#fff" />
            <stop offset="1" stopColor="#a9c8e6" />
          </linearGradient>
        </defs>
      </svg>

      <header className="flex h-[18px] shrink-0 items-center bg-linear-to-r from-[#808080] to-[#c0c0c0] pl-0.5">
        <svg viewBox="0 0 16 16" className="h-4 w-4 shrink-0" fill="none" aria-hidden="true">
          <path d="M.5.5h15v15H.5z" fill="#1878b8" stroke="#d8e8f4" />
          <path d="M3.500 3v8.500H7M8 4h6M11 4v9" stroke="#fff" strokeWidth="2" />
        </svg>
        <h1 className="ml-0.5 truncate text-[12px] font-bold text-[#d4d0c8]">
          AutoCAD LT - [C:\Program Files\AutoCAD LT 2004\Sample\Foundation Plan.dwg]
        </h1>
        <WindowButtons />
      </header>

      <nav className="flex h-5 shrink-0 items-center gap-px pl-[3px] text-[#808080]">
        <svg viewBox="0 0 16 16" className="h-4 w-4 shrink-0" fill="none" aria-hidden="true">
          <path d="M1 4l3-3h10l1 2v10H3l-2-2z" fill="#fff" stroke="#1c3f66" />
          <path d="M3.500 3.500h12v10h-12z" fill="#1878b8" stroke="#16406f" />
          <path d="M9.500 5v7M6 8.500h7M8 7h3v3H8z" stroke="#fff" />
        </svg>
        {MENUS.map((menu) => (
          <button key={menu} type="button" className="px-[5px] text-[11px]">{menu}</button>
        ))}
        <WindowButtons restore />
      </nav>

      <div className="flex h-[27px] shrink-0 items-center overflow-hidden border-t border-b border-t-white border-b-[#808080]">
        <div className="flex h-full shrink-0 items-center border-r border-[#808080] pr-[3px]">
          <Handle />
          {STANDARD.map((name, i) => {
            if (name === "|") return <Separator key={i} />;
            if (name === "v") {
              return (
                <span key={i} className="flex w-3 justify-center">
                  <Triangle dir="down" className="h-[5px] w-[5px] fill-[#a8b0c0]" />
                </span>
              );
            }
            return <ToolButton key={i} name={name} />;
          })}
        </div>
        <div className="flex h-full min-w-0 flex-1 items-center border-l border-white">
          <Handle />
          <ToolButton name="textStyle" />
          <Combo label="Text style" value="CD1" disabled className="ml-0.5 w-[99px]" />
          <span className="w-px" />
          <Separator />
          <span className="w-px" />
          <ToolButton name="dimStyle" />
          <Combo label="Dimension style" value="" disabled arrow={false} className="min-w-0 flex-1" />
        </div>
      </div>

      <div className="mt-px flex h-7 shrink-0 items-center overflow-hidden border-t border-white">
        <div className="flex h-full shrink-0 items-center border-r border-[#808080] pr-[3px]">
          <Handle />
          <ToolButton name="layers" />
          <Combo
            label="Layer"
            value="S-TEXT"
            disabled
            className="w-[298px]"
            lead={
              <span className="flex items-center gap-px pr-0.5 pl-0.5">
                <Icon name="bulb" />
                <Icon name="sun" />
                <Icon name="sunViewport" />
                <Icon name="lock" />
                <span className="h-2.5 w-2.5 border border-black bg-white" />
              </span>
            }
          />
          <ToolButton name="layerPrev" />
        </div>
        <div className="flex h-full min-w-0 flex-1 items-center gap-px border-l border-white">
          <Handle />
          <Combo
            label="Color control"
            value="ByLayer"
            disabled
            className="w-[149px]"
            lead={<span className="mr-0.5 ml-0.5 h-2.5 w-2.5 border border-black bg-white" />}
          />
          <Separator />
          <Combo
            label="Linetype control"
            value="ByLayer"
            disabled
            className="w-[164px]"
            lead={<span className="mr-[3px] ml-0.5 h-px w-[60px] bg-black" />}
          />
          <Separator />
          <Combo
            label="Lineweight control"
            value="ByLayer"
            disabled
            arrow={false}
            className="min-w-0 flex-1"
            lead={<span className="mr-px ml-px h-px w-[34px] bg-black" />}
          />
        </div>
      </div>

      <main className="flex min-h-0 flex-1">
        <aside className="w-[26px] shrink-0 pr-px">
          <Dock tools={DRAW} />
        </aside>

        <div className="flex min-w-0 flex-1 flex-col border border-t-[#404040] border-l-[#404040] border-b-white border-r-white">
          <div className="flex min-h-0 flex-1">
            <div className="relative min-w-0 flex-1 overflow-hidden bg-black">
              <FoundationPlan />
              <NotesEditor />
              <TextFormatting />
              <CommandWindow />
            </div>
            <div className={clsx("flex w-4 shrink-0 flex-col", TRACK)}>
              <ScrollButton dir="up" />
              <span className={clsx("mt-[100px] h-4 w-4", RAISED)} />
              <span className="flex-1" />
              <ScrollButton dir="down" />
            </div>
          </div>
          <div className="flex h-4 shrink-0 bg-[#d4d0c8]">
            <LayoutTabs />
            <div className={clsx("flex flex-1", TRACK)}>
              <span className={clsx("w-[5px]", RAISED)} />
              <ScrollButton dir="left" />
              <span className={clsx("ml-[13px] h-4 w-4", RAISED)} />
              <span className="flex-1" />
              <ScrollButton dir="right" />
            </div>
            <span className="w-4 shrink-0" />
          </div>
        </div>

        <aside className="w-[27px] shrink-0 pl-[3px]">
          <Dock tools={MODIFY} />
        </aside>
      </main>

      <StatusBar />
    </div>
  );
}
